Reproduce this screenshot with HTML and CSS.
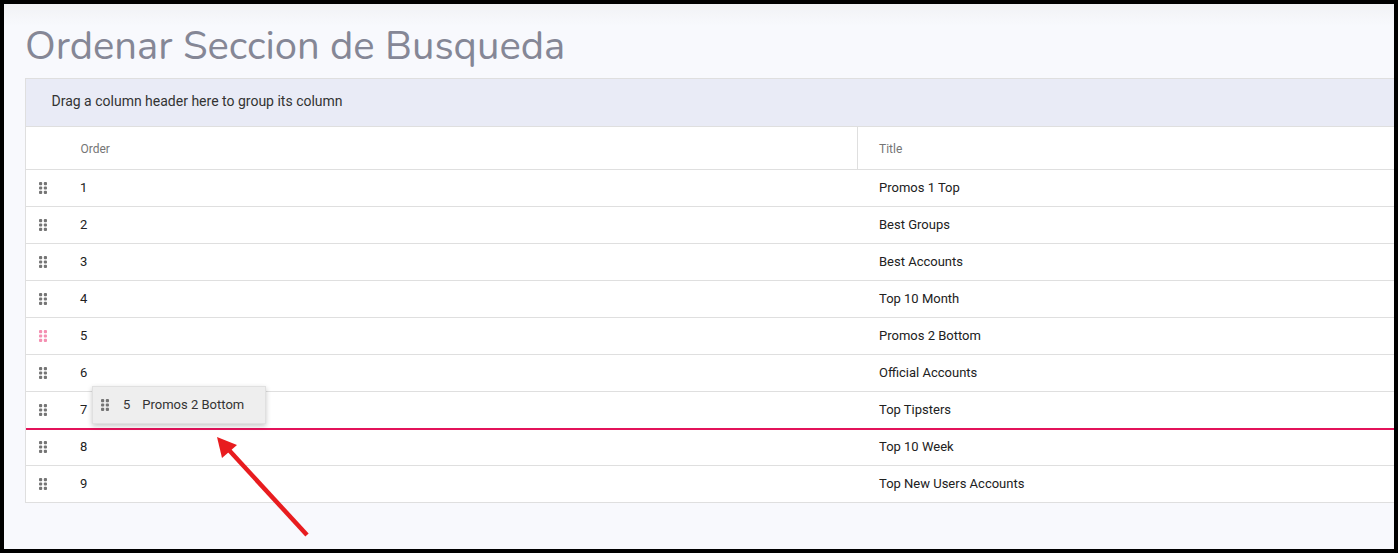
FILE: index.html
```html
<!DOCTYPE html>
<html lang="es">
<head>
<meta charset="utf-8">
<title>Ordenar Seccion de Busqueda</title>
<link rel="stylesheet" href="styles.css">
</head>
<body>
<svg class="defs" width="0" height="0" aria-hidden="true">
  <symbol id="grip" viewBox="0 0 8 12">
    <rect x="0" y="0" width="3.2" height="3.2" rx="1"/><rect x="4.8" y="0" width="3.2" height="3.2" rx="1"/>
    <rect x="0" y="4.4" width="3.2" height="3.2" rx="1"/><rect x="4.8" y="4.4" width="3.2" height="3.2" rx="1"/>
    <rect x="0" y="8.8" width="3.2" height="3.2" rx="1"/><rect x="4.8" y="8.8" width="3.2" height="3.2" rx="1"/>
  </symbol>
</svg>
<main class="screen">
  <h1 class="page-title">Ordenar Seccion de Busqueda</h1>
  <section class="grid">
    <div class="group-panel">Drag a column header here to group its column</div>
    <div class="row head">
      <div class="handle"></div>
      <div class="cell order">Order</div>
      <div class="cell title">Title</div>
    </div>
    <div class="row"><div class="handle"><svg class="grip"><use href="#grip"/></svg></div><div class="cell order">1</div><div class="cell title">Promos 1 Top</div></div>
    <div class="row"><div class="handle"><svg class="grip"><use href="#grip"/></svg></div><div class="cell order">2</div><div class="cell title">Best Groups</div></div>
    <div class="row"><div class="handle"><svg class="grip"><use href="#grip"/></svg></div><div class="cell order">3</div><div class="cell title">Best Accounts</div></div>
    <div class="row"><div class="handle"><svg class="grip"><use href="#grip"/></svg></div><div class="cell order">4</div><div class="cell title">Top 10 Month</div></div>
    <div class="row"><div class="handle dragging"><svg class="grip"><use href="#grip"/></svg></div><div class="cell order">5</div><div class="cell title">Promos 2 Bottom</div></div>
    <div class="row"><div class="handle"><svg class="grip"><use href="#grip"/></svg></div><div class="cell order">6</div><div class="cell title">Official Accounts</div></div>
    <div class="row drop-above"><div class="handle"><svg class="grip"><use href="#grip"/></svg></div><div class="cell order">7</div><div class="cell title">Top Tipsters</div></div>
    <div class="row"><div class="handle"><svg class="grip"><use href="#grip"/></svg></div><div class="cell order">8</div><div class="cell title">Top 10 Week</div></div>
    <div class="row"><div class="handle"><svg class="grip"><use href="#grip"/></svg></div><div class="cell order">9</div><div class="cell title">Top New Users Accounts</div></div>
  </section>
  <div class="drag-clue">
    <svg class="grip"><use href="#grip"/></svg>
    <span class="clue-order">5</span>
    <span>Promos 2 Bottom</span>
  </div>
  <svg class="arrow" width="100" height="110" viewBox="0 0 100 110" aria-hidden="true">
    <line x1="92" y1="100" x2="13" y2="14" stroke="#e81c1f" stroke-width="4.5"/>
    <polygon points="2,2 22,10 7,23" fill="#e81c1f"/>
  </svg>
</main>
</body>
</html>
```
FILE: styles.css
```css
* { box-sizing: border-box; }
html, body { margin: 0; height: 100%; overflow: hidden; }
body { background: #000; padding: 4px; font-family: Roboto, "Liberation Sans", sans-serif; }
.defs { position: absolute; }
.screen {
  position: relative;
  height: 545px;
  overflow: hidden;
  padding-left: 21px;
  background: linear-gradient(#f1f2f5 0, #f8f9fd 22px, #f8f9fd 100%);
}
.page-title {
  margin: 0;
  height: 74px;
  padding-top: 16px;
  font-family: "Nunito", Lato, "Noto Sans", sans-serif;
  font-weight: 400;
  font-size: 40px;
  line-height: 52px;
  color: #858796;
  white-space: nowrap;
}
.grid { border: 1px solid #dfdfdf; border-right: 0; background: #fff; }
.group-panel {
  height: 48px;
  padding: 0 0 4px 25.5px;
  display: flex;
  align-items: center;
  background: #e9ebf6;
  border-bottom: 1px solid #dfdfdf;
  font-size: 14px;
  color: #333;
}
.row {
  position: relative;
  display: flex;
  align-items: center;
  height: 37px;
  font-size: 13px;
  color: #212121;
  border-bottom: 1px solid #dfdfdf;
}
.row:last-child { border-bottom: 0; height: 36px; }
.handle { width: 42px; padding-left: 13px; display: flex; align-items: center; color: #757575; }
.dragging { color: #f48fb1; }
.grip { display: block; width: 8px; height: 12px; fill: currentColor; }
.cell { height: 100%; display: flex; align-items: center; padding-bottom: 2px; }
.order { width: 789px; padding-left: 12px; }
.title { flex: 1; padding-left: 22px; }
.head { height: 43px; font-size: 12px; color: #757575; }
.head .cell { padding-bottom: 0; padding-top: 1px; }
.head .order { padding-left: 12.5px; }
.head .title { border-left: 1px solid #dfdfdf; padding-left: 21px; }
.drop-above::after {
  content: "";
  position: absolute;
  left: 0;
  right: 0;
  bottom: -2px;
  height: 2px;
  background: #e3135a;
}
.drag-clue {
  position: absolute;
  left: 88px;
  top: 382px;
  width: 174px;
  height: 38px;
  display: flex;
  align-items: center;
  padding: 0 0 2px 8px;
  background: #eeeeee;
  border: 1px solid #e0e0e0;
  box-shadow: 0 2px 5px rgba(0, 0, 0, .22);
  font-size: 13px;
  color: #333;
}
.drag-clue .grip { color: #757575; margin-top: 2px; }
.clue-order { margin: 0 12px 0 14px; }
.arrow { position: absolute; left: 211px; top: 431px; }
```
